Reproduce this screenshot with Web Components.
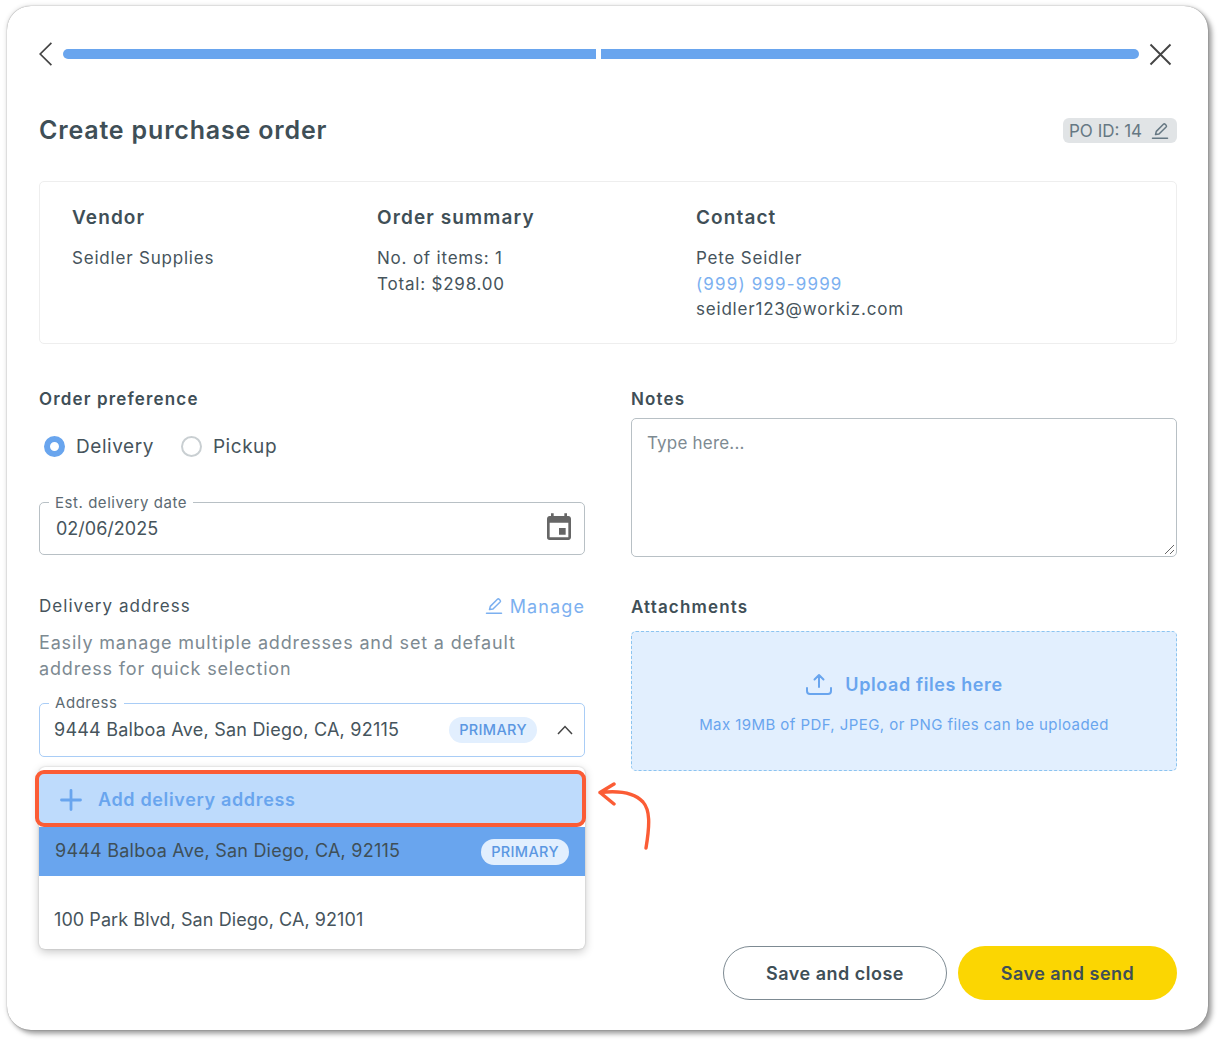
<!DOCTYPE html>
<html lang="en">
<head>
<meta charset="utf-8">
<title>Create purchase order</title>
<style>
  html, body { margin: 0; height: 100%; background: #fff; }
  body { font-family: Inter, "Liberation Sans", sans-serif; color: #46545c; }
</style>
</head>
<body>
<po-modal>
  <po-header></po-header>
  <po-title slot="title">Create purchase order</po-title>
  <po-summary slot="summary"></po-summary>
  <po-form slot="form"></po-form>
  <po-button slot="actions" style="width:224px">Save and close</po-button>
  <po-button slot="actions" kind="primary" style="width:219px">Save and send</po-button>
</po-modal>

<script>
const pencil = `<svg viewBox="0 0 20 20" width="20" height="20" fill="none" stroke="currentColor" stroke-width="1.5" stroke-linejoin="round" stroke-linecap="round"><path d="M5.5 13.6 6.3 10.4 13.4 3.3a1.3 1.3 0 0 1 1.8 0l.9.9a1.3 1.3 0 0 1 0 1.8L9 13z"/><path d="M2.500 17.3h15"/></svg>`;

class PoModal extends HTMLElement {
  connectedCallback() {
    this.attachShadow({ mode: 'open' });
    this.shadowRoot.innerHTML = `
      <style>
        :host {
          display: block;
          box-sizing: border-box;
          width: 1222px;
          height: 1044px;
          padding: 6px 14px 14px 7px;
          overflow: visible;
        }
        .sheet {
          display: flex;
          flex-direction: column;
          box-sizing: border-box;
          height: 1024px;
          padding: 36px 31px 30px 32px;
          background: #fff;
          border-radius: 24px;
          box-shadow: 4px 4px 5px rgba(0,0,0,0.34), 0 0 5px rgba(0,0,0,0.16), 0 0 1px rgba(0,0,0,0.5);
        }
        .foot {
          margin-top: auto;
          display: flex;
          justify-content: flex-end;
          gap: 11px;
        }
      </style>
      <div class="sheet">
        <slot></slot>
        <slot name="title"></slot>
        <slot name="summary"></slot>
        <slot name="form"></slot>
        <div class="foot"><slot name="actions"></slot></div>
      </div>
    `;
  }
}

class PoHeader extends HTMLElement {
  connectedCallback() {
    this.attachShadow({ mode: 'open' });
    this.shadowRoot.innerHTML = `
      <style>
        :host { display: flex; align-items: center; height: 24px; }
        svg { display: block; flex: none; }
        .bar { height: 10px; background: #69a5ee; }
        .a { width: 533px; margin-left: 11px; border-radius: 5px 0 0 5px; }
        .b { width: 538px; margin-left: 5px; border-radius: 0 5px 5px 0; }
        .x { margin-left: 10px; }
      </style>
      <svg width="13" height="24" viewBox="0 0 13 24" fill="none" stroke="#444" stroke-width="1.7"><path d="M12.400 .8 1.200 12l11.200 11.200"/></svg>
      <div class="bar a"></div>
      <div class="bar b"></div>
      <svg class="x" width="23" height="23" viewBox="0 0 23 23" fill="none" stroke="#444" stroke-width="1.9"><path d="M1.500 1.500l20 20M21.500 1.500l-20 20"/></svg>
    `;
  }
}

class PoTitle extends HTMLElement {
  connectedCallback() {
    this.attachShadow({ mode: 'open' });
    this.shadowRoot.innerHTML = `
      <style>
        :host { display: flex; justify-content: space-between; align-items: center; height: 25px; margin-top: 52px; }
        h1 { margin: 0 0 1px; font-size: 25px; font-weight: 600; color: #3f4f57; letter-spacing: .82px; }
        .id {
          display: flex; align-items: center; gap: 8px;
          width: 114px; height: 25px; box-sizing: border-box; padding-left: 6px;
          background: #e1e4e6; border-radius: 6px;
          color: #667883; font-size: 17px; white-space: nowrap;
        }
        svg { display: block; }
      </style>
      <h1><slot></slot></h1>
      <div class="id">PO ID: 14 ${pencil}</div>
    `;
  }
}

class PoSummary extends HTMLElement {
  connectedCallback() {
    this.attachShadow({ mode: 'open' });
    this.shadowRoot.innerHTML = `
      <style>
        :host {
          display: grid;
          grid-template-columns: 305px 319px 1fr;
          box-sizing: border-box;
          height: 163px;
          margin-top: 38px;
          padding: 23px 32px 0;
          border: 1px solid #eeeeee;
          border-radius: 5px;
          font-size: 17px;
          line-height: 25.5px;
          letter-spacing: .8px;
          color: #46545c;
        }
        h2 { margin: 0 0 16px; font-size: 19px; line-height: 25px; font-weight: 600; color: #3f4f57; letter-spacing: 1.1px; }
        a { color: #7cb0f0; text-decoration: none; display: block; letter-spacing: 1.15px; }
      </style>
      <div><h2>Vendor</h2>Seidler Supplies</div>
      <div><h2>Order summary</h2>No. of items: 1<br>Total: $298.00</div>
      <div><h2>Contact</h2>Pete Seidler<a>(999) 999-9999</a>seidler123@workiz.com</div>
    `;
  }
}

class PoRadio extends HTMLElement {
  connectedCallback() {
    const on = this.hasAttribute('checked');
    this.attachShadow({ mode: 'open' });
    this.shadowRoot.innerHTML = `
      <style>
        :host { display: inline-flex; align-items: center; gap: 11px; font-size: 19px; letter-spacing: .55px; color: #46545c; }
        i { display: block; box-sizing: border-box; width: 21px; height: 21px; border-radius: 50%; }
        .on { border: 6px solid #69a5ee; }
        .off { border: 2px solid #c9cfd2; }
      </style>
      <i class="${on ? 'on' : 'off'}"></i><slot></slot>
    `;
  }
}

class PoField extends HTMLElement {
  connectedCallback() {
    const label = this.getAttribute('label');
    const active = this.hasAttribute('active');
    this.attachShadow({ mode: 'open' });
    this.shadowRoot.innerHTML = `
      <style>
        :host {
          display: flex; align-items: center; position: relative; box-sizing: border-box;
          height: ${active ? 54 : 53}px; padding: 0 11px ${active ? 1 : 0}px ${active ? 14 : 16}px;
          border: 1px solid ${active ? '#a9cdf6' : '#b8c0c5'};
          border-radius: 5px;
          font-size: 18px; letter-spacing: ${active ? '.23px' : '0'}; color: #46545c;
        }
        .lab {
          position: absolute; left: 9px; top: ${active ? -11 : -10}px; padding: 0 6px;
          background: #fff; font-size: 15px; line-height: 20px; color: #5c6a72; letter-spacing: .55px;
        }
        .val { flex: 1; white-space: nowrap; }
        ::slotted(*) { flex: none; }
      </style>
      <span class="lab">${label}</span>
      <span class="val"><slot></slot></span>
      <slot name="end"></slot>
    `;
  }
}

class PoPill extends HTMLElement {
  connectedCallback() {
    this.attachShadow({ mode: 'open' });
    this.shadowRoot.innerHTML = `
      <style>
        :host {
          display: inline-flex; align-items: center; justify-content: center;
          width: 88px; height: 26px; border-radius: 13px;
          background: #e2effe; color: #5b97e2;
          font-size: 14.5px; font-weight: 500; letter-spacing: .35px;
        }
      </style>
      <slot></slot>
    `;
  }
}

class PoDropdown extends HTMLElement {
  connectedCallback() {
    this.attachShadow({ mode: 'open' });
    this.shadowRoot.innerHTML = `
      <style>
        :host {
          display: block; position: absolute; left: 0; right: 0; top: 64px; height: 182px;
          background: #fff; border-radius: 6px;
          box-shadow: 0 3px 10px rgba(0,0,0,0.22), 0 0 2px rgba(0,0,0,0.2);
          font-size: 18px; letter-spacing: .23px; color: #46545c;
        }
        .add {
          position: absolute; left: -4px; right: -1px; top: 3px; height: 57px; box-sizing: border-box;
          display: flex; align-items: center; gap: 16px; padding: 2px 0 0 21px;
          background: #bedbfc; border: 4px solid #fb5c35; border-radius: 9px;
          color: #69a5ee; font-weight: 600; font-size: 18px; letter-spacing: .65px;
        }
        .sel {
          position: absolute; left: 0; right: 0; top: 60px; height: 49px; box-sizing: border-box;
          display: flex; align-items: center; justify-content: space-between; padding: 0 16px 2px;
          background: #69a5ee; color: #3f4f57;
        }
        .sel po-pill { margin-top: 2px; }
        .plain { position: absolute; left: 15px; top: 140px; line-height: 26px; letter-spacing: .07px; }
        svg { display: block; }
        .arrow { position: absolute; left: 558px; top: 15px; }
      </style>
      <div class="add"><svg width="22" height="22" viewBox="0 0 22 22" stroke="#69a5ee" stroke-width="2.800" stroke-linecap="round"><path d="M11 1.500v19M1.500 11h19"/></svg>Add delivery address</div>
      <div class="sel">9444 Balboa Ave, San Diego, CA, 92115<po-pill>PRIMARY</po-pill></div>
      <div class="plain">100 Park Blvd, San Diego, CA, 92101</div>
      <svg class="arrow" width="56" height="70" viewBox="0 0 56 70" fill="none" stroke="#fb5c35" stroke-width="3.400" stroke-linecap="round" stroke-linejoin="round"><path d="M17 2 3 10.500 17 22M3 10.500C16 9 35 8 46 20 53 28 53 42 49 66"/></svg>
    `;
  }
}

class PoUpload extends HTMLElement {
  connectedCallback() {
    this.attachShadow({ mode: 'open' });
    this.shadowRoot.innerHTML = `
      <style>
        :host {
          display: flex; flex-direction: column; align-items: center; box-sizing: border-box;
          height: 140px; margin-top: 13px; padding-top: 40px;
          background: #e2effe; border: 1px dashed #8cc4f0; border-radius: 5px; color: #69a5ee;
        }
        .top { display: flex; align-items: center; gap: 12px; height: 24px; font-size: 18px; font-weight: 600; letter-spacing: .6px; }
        .sub { margin-top: 19px; font-size: 15px; letter-spacing: .43px; line-height: 20px; white-space: nowrap; }
        svg { display: block; }
      </style>
      <div class="top">
        <svg width="28" height="22" viewBox="0 0 28 22" fill="none" stroke="#69a5ee" stroke-width="2" stroke-linecap="round" stroke-linejoin="round"><path d="M14 14V2M9.500 6.500 14 2l4.500 4.500M2 15v3a3 3 0 0 0 3 3h18a3 3 0 0 0 3-3v-3"/></svg>
        <span>Upload files here</span>
      </div>
      <div class="sub">Max 19MB of PDF, JPEG, or PNG files can be uploaded</div>
    `;
  }
}

class PoButton extends HTMLElement {
  connectedCallback() {
    const primary = this.getAttribute('kind') === 'primary';
    this.attachShadow({ mode: 'open' });
    this.shadowRoot.innerHTML = `
      <style>
        :host {
          display: flex; align-items: center; justify-content: center; box-sizing: border-box;
          height: 54px; border-radius: 27px;
          background: ${primary ? '#fbd602' : '#fff'};
          border: ${primary ? '0' : '1px solid #7d8a92'};
          font-size: 18px; font-weight: 600; letter-spacing: .5px; color: #3f4f57;
        }
      </style>
      <slot></slot>
    `;
  }
}

class PoForm extends HTMLElement {
  connectedCallback() {
    this.attachShadow({ mode: 'open' });
    this.shadowRoot.innerHTML = `
      <style>
        :host {
          display: grid; grid-template-columns: 546px 546px; column-gap: 46px;
          margin-top: 44px;
        }
        .lab { font-size: 17px; line-height: 22px; font-weight: 600; color: #3f4f57; letter-spacing: 1.15px; }
        .radios { display: flex; gap: 27px; height: 24px; margin: 24px 0 0 5px; }
        .date { margin-top: 44px; }
        .addr-head { display: flex; justify-content: space-between; align-items: center; height: 22px; margin-top: 40px; font-size: 17px; letter-spacing: 1.05px; }
        .manage { display: flex; align-items: center; gap: 6px; color: #7cb0f0; font-size: 18px; letter-spacing: 1.1px; }
        .help { margin: 13px 0 0; font-size: 18px; line-height: 26px; color: #7d8a92; letter-spacing: .83px; }
        .anchor { position: relative; margin-top: 21px; }
        .notes {
          box-sizing: border-box; height: 139px; margin-top: 8px; padding: 14px 15px;
          border: 1px solid #b8c0c5; border-radius: 5px; position: relative;
          font-size: 17px; color: #7d8a92; letter-spacing: .2px;
        }
        .grip { position: absolute; right: 1px; bottom: 1px; display: block; }
        .attach { margin-top: 39px; }
        .chev { display: block; margin-left: 20px; }
        .cal { display: block; margin: -2px -2px 0 0; }
        .row { display: flex; align-items: center; }
      </style>
      <div>
        <div class="lab">Order preference</div>
        <div class="radios">
          <po-radio checked>Delivery</po-radio>
          <po-radio>Pickup</po-radio>
        </div>
        <po-field class="date" label="Est. delivery date">02/06/2025
          <svg class="cal" slot="end" width="32" height="32" viewBox="0 0 24 24" fill="#666"><path d="M17 12h-5v5h5v-5zM16 1v2H8V1H6v2H5c-1.110 0-1.990.9-1.990 2L3 19a2 2 0 0 0 2 2h14c1.100 0 2-.9 2-2V5c0-1.100-.9-2-2-2h-1V1h-2zm3 18H5V8h14v11z"/></svg>
        </po-field>
        <div class="addr-head">
          <span>Delivery address</span>
          <span class="manage">${pencil}Manage</span>
        </div>
        <p class="help">Easily manage multiple addresses and set a default address for quick selection</p>
        <div class="anchor">
          <po-field label="Address" active>9444 Balboa Ave, San Diego, CA, 92115
            <span class="row" slot="end"><po-pill>PRIMARY</po-pill><svg class="chev" width="16" height="10" viewBox="0 0 16 10" fill="none" stroke="#444" stroke-width="1.500"><path d="M1 9l7-7.500L15 9"/></svg></span>
          </po-field>
          <po-dropdown></po-dropdown>
        </div>
      </div>
      <div>
        <div class="lab">Notes</div>
        <div class="notes">Type here...
          <svg class="grip" width="12" height="12" viewBox="0 0 12 12" stroke="#666" stroke-width="1"><path d="M11 2 2 11M11 7l-4 4"/></svg>
        </div>
        <div class="lab attach">Attachments</div>
        <po-upload></po-upload>
      </div>
    `;
  }
}

customElements.define('po-modal', PoModal);
customElements.define('po-header', PoHeader);
customElements.define('po-title', PoTitle);
customElements.define('po-summary', PoSummary);
customElements.define('po-radio', PoRadio);
customElements.define('po-field', PoField);
customElements.define('po-pill', PoPill);
customElements.define('po-dropdown', PoDropdown);
customElements.define('po-upload', PoUpload);
customElements.define('po-button', PoButton);
customElements.define('po-form', PoForm);
</script>
</body>
</html>
